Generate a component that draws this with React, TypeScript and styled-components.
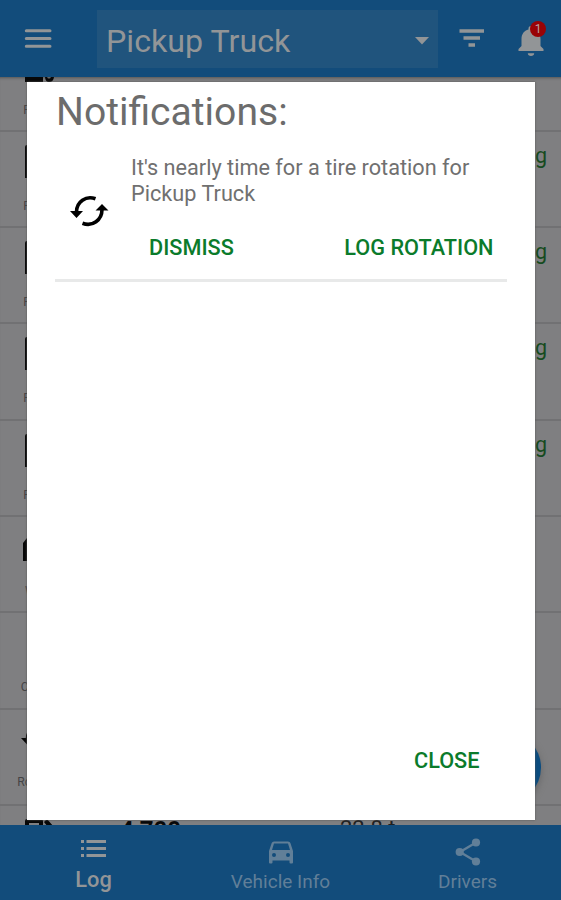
import React from 'react';
import styled, { createGlobalStyle } from 'styled-components';

const GlobalStyle = createGlobalStyle`
  * { box-sizing: border-box; }
  body { margin: 0; font-family: Roboto, sans-serif; background: #7f7f81; }
  button { font: inherit; border: 0; background: none; padding: 0; margin: 0; }
  svg { display: block; flex: none; }
`;

const Screen = styled.div`
  position: relative;
  width: 561px;
  height: 900px;
  display: grid;
  grid-template-rows: 77px 748px 75px;
  overflow: hidden;
`;

const Header = styled.header`
  display: flex;
  align-items: flex-start;
  background: #124c7b;
  padding: 10px 0 0 20px;
`;

const IconButton = styled.button<{ $left?: number; $top?: number }>`
  position: relative;
  margin: ${p => p.$top ?? 0}px 0 0 ${p => p.$left ?? 0}px;
`;

const VehicleSelect = styled.div`
  display: flex;
  align-items: center;
  justify-content: space-between;
  width: 341px;
  height: 58px;
  margin-left: 41px;
  padding: 3px 9px 0 9px;
  background: #20547d;
  color: #929597;
  font-size: 32.2px;
`;

const Badge = styled.span`
  position: absolute;
  top: -5px;
  left: 12px;
  width: 16px;
  height: 16px;
  border-radius: 50%;
  background: #990306;
  color: #b8a0a0;
  font-size: 12px;
  line-height: 16px;
  text-align: center;
`;

const LogList = styled.main`
  overflow: hidden;
  background: #7f7f81;
  box-shadow: inset 0 3px 3px -2px #555;
`;

const Rows = styled.div`
  margin-top: -41.5px;
`;

const Row = styled.div`
  display: grid;
  grid-template-columns: 80px 1fr 180px 14px;
  height: 96.3px;
  border-bottom: 2px solid #717173;
`;

const Kind = styled.div`
  display: flex;
  flex-direction: column;
  align-items: center;
  padding-top: 12px;
  gap: 20px;
  color: #070707;
`;

const KindLabel = styled.span`
  color: #444446;
  font-size: 12.2px;
  line-height: 16px;
`;

const Reading = styled.div`
  padding: 10px 0 0 40px;
  color: #080808;
  font-size: 24px;
  font-weight: 700;
  line-height: 28px;
`;

const Economy = styled.div<{ $plain?: boolean }>`
  padding-top: ${p => (p.$plain ? 9 : 10)}px;
  padding-right: ${p => (p.$plain ? 157 : 0)}px;
  text-align: right;
  white-space: nowrap;
  color: ${p => (p.$plain ? '#202020' : '#164b20')};
  font-size: 21.5px;
  line-height: 27px;
`;

const Mileage = styled(Economy)`
  padding: 9px 0 0;
  margin-left: -27px;
  color: #202020;
  font-size: 22px;
  text-align: left;
`;

const AddButton = styled.button`
  position: absolute;
  left: 468px;
  top: 731px;
  width: 73px;
  height: 73px;
  border-radius: 50%;
  background: #0b4c7f;
  box-shadow: 0 3px 7px #666;
`;

const Nav = styled.nav`
  display: grid;
  grid-template-columns: repeat(3, 1fr);
  background: #124c7b;
`;

const NavItem = styled.a<{ $active?: boolean }>`
  display: flex;
  flex-direction: column;
  align-items: center;
  padding-top: ${p => (p.$active ? 10 : 12)}px;
  gap: ${p => (p.$active ? 4 : 0)}px;
  color: ${p => (p.$active ? '#929597' : '#617f98')};
  font-size: ${p => (p.$active ? 21.8 : 19)}px;
  font-weight: ${p => (p.$active ? 500 : 400)};
  line-height: 30px;
`;

const Dialog = styled.section`
  position: absolute;
  left: 27px;
  top: 82px;
  width: 507.500px;
  height: 738px;
  display: flex;
  flex-direction: column;
  padding: 4px 28px 0 29px;
  background: #fff;
  box-shadow: 0 0 2px #555;
`;

const Title = styled.h1`
  margin: 0;
  color: #6c6c6c;
  font-size: 39.1px;
  font-weight: 400;
  line-height: 52px;
`;

const Notice = styled.article`
  display: grid;
  grid-template-columns: 76px 1fr;
  height: 144px;
  margin-left: -1px;
  padding-top: 17px;
  border-bottom: 3px solid #e8e9e9;
`;

const NoticeIcon = styled.div`
  padding: 40px 0 0 14px;
`;

const Message = styled.p`
  margin: 0;
  color: #707070;
  font-size: 21.7px;
  line-height: 25.5px;
`;

const Actions = styled.div`
  display: flex;
  justify-content: space-between;
  padding: 27px 13px 0 18px;
`;

const Action = styled.button<{ $end?: boolean }>`
  color: #0b7b2b;
  font-size: 21.7px;
  font-weight: 500;
  line-height: 30px;
  ${p => p.$end && 'margin: auto 27px 44px auto;'}
`;

const MenuIcon = () => (
  <svg width="36" height="36" viewBox="0 0 36 36" fill="none" stroke="#929597" strokeWidth="3" strokeLinecap="round">
    <path d="M6.300 10.800H30M6.300 18.500H30M6.300 26.200H30" />
  </svg>
);
const FilterIcon = () => (
  <svg width="26" height="20" viewBox="0 0 26 20" fill="none" stroke="#929597" strokeWidth="3.4">
    <path d="M.5 3H25M4.500 10H21M9.500 17H16" />
  </svg>
);
const BellIcon = () => (
  <svg width="26" height="30" viewBox="0 0 26 30" fill="#929597">
    <path d="M13 30c1.8 0 3.2-1.1 3.2-2.8H9.8C9.8 28.900 11.200 30 13 30zM22.500 20V13c0-4.700-2.400-8.300-7-9.400V2.500a2.500 2.500 0 0 0-5 0v1.100C6 4.700 3.500 8.300 3.500 13v7L.5 23v2h25v-2z" />
  </svg>
);
const PumpIcon = () => (
  <svg width="30" height="34" viewBox="0 0 30 34" fill="currentColor" fillRule="evenodd">
    <path d="M0 3Q0 1 2 1H16Q18 1 18 3V17H20Q22 17 22 19V28Q22 30.500 24 30.500Q26 30.500 26 28V13L19 4L22 1L29 9V28Q29 34 24 34Q20 34 20 28V20H18V34H0ZM4 5V14H14V5Z" />
  </svg>
);
const WrenchIcon = () => (
  <svg width="34" height="34" viewBox="0 0 34 34" fill="currentColor">
    <path d="M8 4H26L34 13V32H0V14Z" />
  </svg>
);
const SyncIcon = () => (
  <svg width="40" height="32" viewBox="0 0 40 32">
    <path d="M26.500 3.800C17 .3 7.500 6.500 7.500 17M13.500 28.200C23.500 32 33 25 33 14.500" fill="none" stroke="currentColor" strokeWidth="3.6" />
    <path d="M1 16H14L7.500 23ZM26.500 15.500L33 9L39.500 15.500Z" fill="currentColor" />
  </svg>
);
const ListIcon = () => (
  <svg width="27" height="26" viewBox="0 0 27 26" fill="currentColor">
    <path d="M1 5H4V8H1ZM1 12H4V15H1ZM1 19H4V22H1ZM6.500 5H26V8H6.500ZM6.500 12H26V15H6.500ZM6.500 19H26V22H6.500Z" />
  </svg>
);
const CarIcon = () => (
  <svg width="28" height="30" viewBox="0 0 26 30" fill="currentColor" fillRule="evenodd">
    <path d="M22.400 6Q22 4.500 20 4.500H6Q4.300 4.500 3.700 6L1 14V25.500Q1 26.500 2 26.500H3.500Q4.500 26.500 4.500 25.500V23.500H21.500V25.500Q21.500 26.500 22.500 26.500H24Q25 26.500 25 25.500V14ZM6 6.500H20L22 13H4ZM6 16A2 2 0 1 1 6 20A2 2 0 1 1 6 16ZM20 16A2 2 0 1 1 20 20A2 2 0 1 1 20 16Z" />
  </svg>
);
const ShareIcon = () => (
  <svg width="26" height="30" viewBox="0 0 26 30" fill="currentColor">
    <path d="M21 5.500L5 15L21 24.500" fill="none" stroke="currentColor" strokeWidth="2.400" />
    <circle cx="21" cy="5.500" r="4.100" /><circle cx="4.700" cy="15" r="4.100" /><circle cx="21" cy="24.500" r="4.100" />
  </svg>
);

type Entry = { label: string; icon: React.ReactNode; economy?: string; reading?: string; mileage?: string };

const fill: Entry = { label: 'Fill Up', icon: <PumpIcon />, economy: 'mpg' };
const entries: Entry[] = [
  { label: 'Fill Up', icon: <PumpIcon /> },
  fill, fill, fill, fill,
  { label: 'Wash', icon: <WrenchIcon /> },
  { label: 'Charge', icon: <svg width="34" height="34" /> },
  { label: 'Rotation', icon: <SyncIcon /> },
  { label: 'Fill Up', icon: <PumpIcon />, reading: '4,700', mileage: '22.8 t' },
];

export default function App() {
  return (
    <>
      <GlobalStyle />
      <Screen>
        <Header>
          <IconButton $top={10}><MenuIcon /></IconButton>
          <VehicleSelect>
            Pickup Truck
            <svg width="14" height="8" viewBox="0 0 14 8" fill="#929597"><path d="M0 0H14L7 7.500Z" /></svg>
          </VehicleSelect>
          <IconButton $left={21} $top={18}><FilterIcon /></IconButton>
          <IconButton $left={33} $top={16}><BellIcon /><Badge>1</Badge></IconButton>
        </Header>
        <LogList>
          <Rows>
            {entries.map((entry, i) => (
              <Row key={i}>
                <Kind>{entry.icon}<KindLabel>{entry.label}</KindLabel></Kind>
                <Reading>{entry.reading}</Reading>
                {entry.mileage ? <Mileage>{entry.mileage}</Mileage> : <Economy>{entry.economy}</Economy>}
              </Row>
            ))}
          </Rows>
        </LogList>
        <Nav>
          <NavItem $active><ListIcon />Log</NavItem>
          <NavItem><CarIcon />Vehicle Info</NavItem>
          <NavItem><ShareIcon />Drivers</NavItem>
        </Nav>
        <AddButton aria-label="Add" />
        <Dialog role="dialog">
          <Title>Notifications:</Title>
          <Notice>
            <NoticeIcon><SyncIcon /></NoticeIcon>
            <div>
              <Message>It's nearly time for a tire rotation for Pickup Truck</Message>
              <Actions><Action>DISMISS</Action><Action>LOG ROTATION</Action></Actions>
            </div>
          </Notice>
          <Action $end>CLOSE</Action>
        </Dialog>
      </Screen>
    </>
  );
}
